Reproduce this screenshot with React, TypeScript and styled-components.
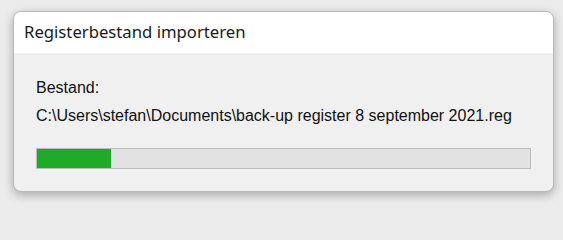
import React from "react";
import styled, { createGlobalStyle } from "styled-components";

const GlobalStyle = createGlobalStyle`
  html, body {
    margin: 0;
    padding: 0;
    background: #ebebeb;
  }
  * {
    box-sizing: border-box;
  }
`;

const Page = styled.div`
  width: 563px;
  height: 203px;
  padding: 11px 9px 0 13px;
`;

const Dialog = styled.div`
  width: 541px;
  height: 181px;
  border-radius: 8px;
  background: #f0f0f0;
  border: 1px solid #b9b9b9;
  box-shadow: 0 3px 10px rgba(0, 0, 0, 0.28);
  overflow: hidden;
  display: flex;
  flex-direction: column;
`;

const TitleBar = styled.div`
  height: 41px;
  background: #ffffff;
  display: flex;
  align-items: center;
  padding: 0 0 2px 10px;
  font-family: "Noto Sans", "Open Sans", sans-serif;
  font-size: 16.7px;
  color: #1a1a1a;
`;

const Body = styled.div`
  padding: 21px 22px 0 22px;
  font-family: "Liberation Sans", Arial, sans-serif;
  font-size: 16px;
  color: #111;
  display: flex;
  flex-direction: column;
`;

const Label = styled.div`
  line-height: 28px;
`;

const Track = styled.div`
  margin-top: 18px;
  height: 21px;
  background: #e2e2e2;
  border: 1px solid #bcbcbc;
  display: flex;
`;

const Fill = styled.div`
  background: #1faa2a;
`;

export default function App() {
  const progress = 15;
  return (
    <>
      <GlobalStyle />
      <Page>
        <Dialog>
          <TitleBar>Registerbestand importeren</TitleBar>
          <Body>
            <Label>Bestand:</Label>
            <Label>C:\Users\stefan\Documents\back-up register 8 september 2021.reg</Label>
            <Track>
              <Fill style={{ width: `${progress}%` }} />
            </Track>
          </Body>
        </Dialog>
      </Page>
    </>
  );
}
